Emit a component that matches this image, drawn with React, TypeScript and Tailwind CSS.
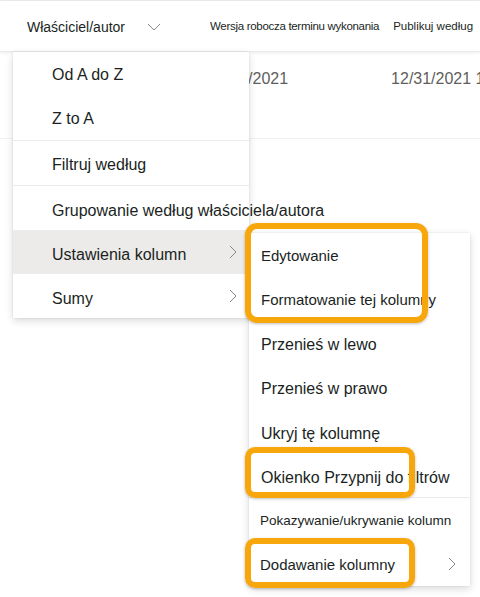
import React from 'react';

const font = { fontFamily: '"Liberation Sans", Arial, sans-serif' };

function Chevron({ className = '' }: { className?: string }) {
  return (
    <svg width="8" height="14" viewBox="0 0 8 14" className={className} fill="none">
      <path d="M1 1l6 6-6 6" stroke="#8a8886" strokeWidth="1" />
    </svg>
  );
}

function Item({ label, chevron, size = 'text-[16px]', pad = 'pt-0' }: { label: string; chevron?: boolean; size?: string; pad?: string }) {
  return (
    <div className="flex h-11 items-center justify-between whitespace-nowrap">
      <span className={`${size} ${pad}`}>{label}</span>
      {chevron && <Chevron className="mr-[12px]" />}
    </div>
  );
}

export default function App() {
  return (
    <div className="relative h-[597px] w-[480px] overflow-hidden bg-white text-[#201f1e]" style={font}>
      {/* grid header */}
      <div className="h-px bg-[#edebe9]" />
      <div className="flex h-[51px] items-center whitespace-nowrap border-b border-[#edebe9] pt-[2px] shadow-[0_1px_3px_rgba(0,0,0,0.08)]">
        <div className="flex w-[210px] items-center pl-[27px]">
          <span className="text-[14px]">Właściciel/autor</span>
          <svg width="14" height="8" viewBox="0 0 14 8" className="ml-[22px]" fill="none">
            <path d="M1 1l6 6 6-6" stroke="#8a8886" strokeWidth="1" />
          </svg>
        </div>
        <span className="text-[11.5px] tracking-[-0.3px]">Wersja robocza terminu wykonania</span>
        <span className="ml-[14px] text-[11.5px]">Publikuj według</span>
      </div>
      {/* first row */}
      <div className="flex h-[87px] whitespace-nowrap border-b border-[#f3f2f1] pt-[15px] text-[16px] text-[#605e5c]">
        <span className="ml-[208px]">10/31/2021</span>
        <span className="ml-[103px]">12/31/2021 11:00</span>
      </div>

      {/* context menu */}
      <div className="absolute left-[13px] top-[52px] w-[236px] bg-white shadow-[0_3px_8px_rgba(0,0,0,0.14),0_0_2px_rgba(0,0,0,0.1)]">
        <div className="pl-[39px]"><Item label="Od A do Z" pad="pt-[2px]" /></div>
        <div className="pl-[39px]"><Item label="Z to A" pad="pt-[2px]" /></div>
        <div className="h-px bg-[#edebe9]" />
        <div className="pl-[39px]"><Item label="Filtruj według" pad="pt-[4px]" /></div>
        <div className="h-px bg-[#edebe9]" />
        <div className="pl-[39px]"><Item label="Grupowanie według właściciela/autora" pad="pt-[5px]" /></div>
        <div className="bg-[#edebe9] pl-[39px]"><Item label="Ustawienia kolumn" chevron pad="pt-[6px]" /></div>
        <div className="pl-[39px]"><Item label="Sumy" chevron pad="pt-[6px]" /></div>
      </div>

      {/* submenu */}
      <div className="absolute left-[249px] top-[233px] w-[221px] bg-white shadow-[0_3px_8px_rgba(0,0,0,0.14),0_0_2px_rgba(0,0,0,0.1)]">
        <div className="pl-[12px]">
          <Item label="Edytowanie" size="text-[15px]" pad="pt-[2px]" />
          <Item label="Formatowanie tej kolumny" size="text-[15px]" pad="pt-[2px]" />
          <Item label="Przenieś w lewo" pad="pt-[4px]" />
          <Item label="Przenieś w prawo" pad="pt-[4px]" />
          <Item label="Ukryj tę kolumnę" pad="pt-[5px]" />
          <Item label="Okienko Przypnij do filtrów" pad="pt-[5px]" />
        </div>
        <div className="h-px bg-[#edebe9]" />
        <div className="pl-[11px]">
          <Item label="Pokazywanie/ukrywanie kolumn" size="text-[13.5px]" pad="pt-[2px]" />
          <div className="flex h-11 items-center justify-between whitespace-nowrap">
            <span className="pt-[2px] text-[15px]">Dodawanie kolumny</span>
            <Chevron className="mr-[14px]" />
          </div>
        </div>
      </div>

      {/* callout highlights */}
      <div className="absolute left-[245px] top-[223px] h-[100px] w-[183px] rounded-[12px] border-[6px] border-[#f7a70c] shadow-[0_1px_3px_rgba(0,0,0,0.25)]" />
      <div className="absolute left-[245px] top-[447px] h-[51px] w-[170px] rounded-[10px] border-[6px] border-[#f7a70c] shadow-[0_1px_3px_rgba(0,0,0,0.25)]" />
      <div className="absolute left-[245px] top-[538px] h-[50px] w-[170px] rounded-[10px] border-[6px] border-[#f7a70c] shadow-[0_1px_3px_rgba(0,0,0,0.25)]" />
    </div>
  );
}
